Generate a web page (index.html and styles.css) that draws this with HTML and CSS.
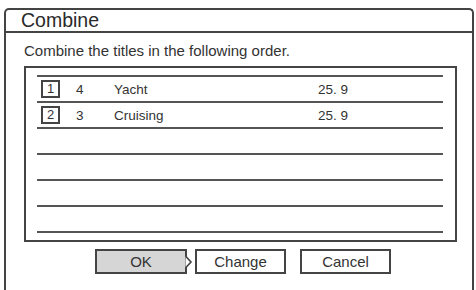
FILE: index.html
```html
<!DOCTYPE html>
<html>
<head>
<meta charset="utf-8">
<link rel="stylesheet" href="styles.css">
</head>
<body>
<div class="frame">
  <div class="titlebar">Combine</div>
  <div class="content">
    <p class="prompt">Combine the titles in the following order.</p>
    <div class="listbox">
      <div class="list">
        <div class="row"><span class="badge">1</span><span class="idx">4</span><span class="name">Yacht</span><span class="time">25. 9</span></div>
        <div class="row"><span class="badge">2</span><span class="idx">3</span><span class="name">Cruising</span><span class="time">25. 9</span></div>
        <div class="row"></div>
        <div class="row"></div>
        <div class="row"></div>
        <div class="row"></div>
      </div>
    </div>
    <div class="buttons">
      <div class="btn btn-ok">OK
        <svg class="pointer" width="8" height="14" viewBox="0 0 8 14"><polyline points="0.5,1 6,7 0.5,13" fill="#fff" stroke="#444" stroke-width="1.6" stroke-linejoin="miter"/></svg>
      </div>
      <div class="btn btn-change">Change</div>
      <div class="btn btn-cancel">Cancel</div>
    </div>
  </div>
</div>
</body>
</html>
```

FILE: styles.css
```css
html, body {
  margin: 0;
  padding: 0;
  background: #fff;
  overflow: hidden;
}
body {
  font-family: "Liberation Sans", Arial, sans-serif;
  color: #333;
  width: 476px;
  height: 290px;
}
.frame {
  margin: 8px 0 0 4px;
  width: 466px;
  height: 290px;
  border: 2px solid #444;
  border-bottom: none;
  border-radius: 5px 5px 0 0;
}
.titlebar {
  height: 21px;
  line-height: 21px;
  font-size: 19.5px;
  padding-left: 15px;
  border-bottom: 2px solid #444;
  color: #2a2a2a;
}
.content {
  padding-left: 18px;
}
.prompt {
  margin: 0;
  padding-top: 10px;
  font-size: 15px;
  line-height: 16px;
  height: 16px;
}
.listbox {
  margin-top: 7px;
  border: 2px solid #444;
  padding: 7px 12px 0 11px;
  box-sizing: border-box;
  height: 176px;
  width: 433px;
}
.list {
  border-top: 2px solid #555;
}
.row {
  height: 24px;
  border-bottom: 2px solid #555;
  display: flex;
  align-items: center;
  font-size: 13.5px;
}
.badge {
  box-sizing: border-box;
  width: 19px;
  height: 18px;
  border: 2px solid #444;
  margin-left: 4px;
  font-size: 13px;
  line-height: 14px;
  text-align: center;
}
.idx {
  margin-left: 16px;
  width: 38px;
}
.name {
  width: 204px;
}
.buttons {
  display: flex;
  margin-top: 7px;
  padding-left: 71px;
}
.btn {
  position: relative;
  box-sizing: border-box;
  height: 25px;
  border: 2px solid #444;
  font-size: 15px;
  line-height: 21px;
  text-align: center;
}
.btn-ok {
  width: 92px;
  background: #d6d6d6;
}
.btn-change {
  width: 91px;
  margin-left: 8px;
}
.btn-cancel {
  width: 91px;
  margin-left: 14px;
}
.pointer {
  position: absolute;
  right: -8px;
  top: 4px;
}
```
